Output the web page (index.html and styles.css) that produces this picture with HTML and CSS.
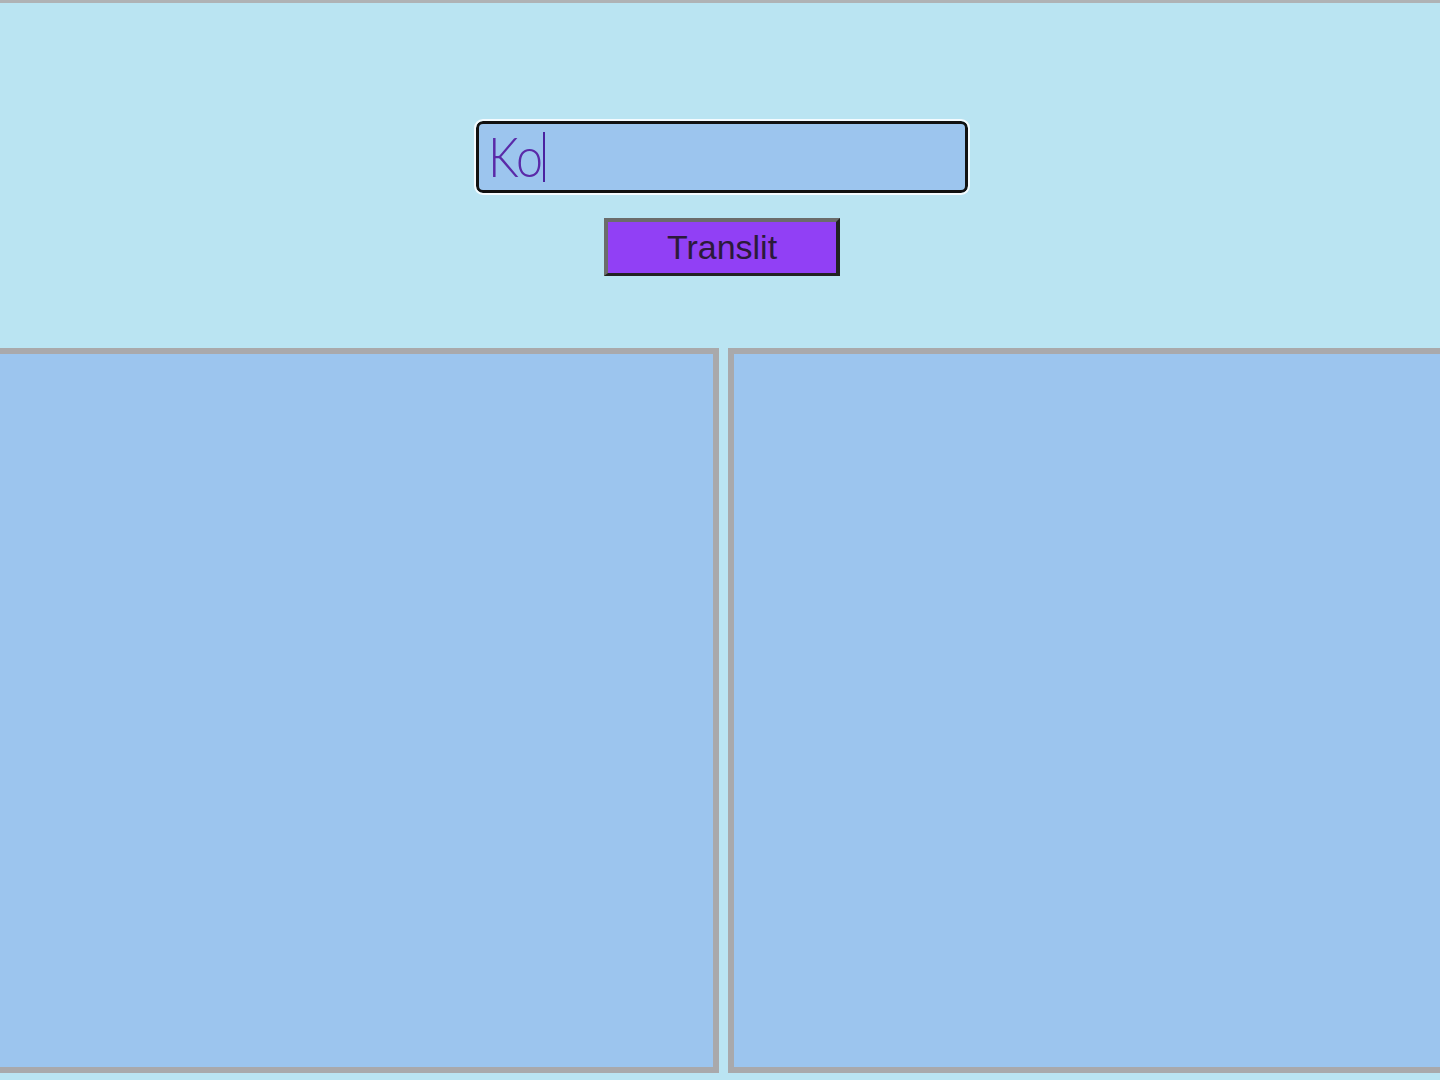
FILE: index.html
```html
<!DOCTYPE html>
<html lang="en">
<head>
<meta charset="utf-8">
<title>Translit</title>
<link rel="stylesheet" href="styles.css">
</head>
<body>
  <header class="top">
    <div class="field" role="textbox" aria-label="Text to transliterate"><span class="field-text">Ko</span><span class="caret"></span></div>
    <button class="btn" type="button">Translit</button>
  </header>
  <main class="panels">
    <section class="panel"></section>
    <section class="panel"></section>
  </main>
</body>
</html>
```

FILE: styles.css
```css
html, body {
  margin: 0;
  padding: 0;
}

body {
  background: #bae4f2;
  border-top: 3px solid #afb2b5;
  height: 1077px;
  overflow: hidden;
  font-family: "Liberation Sans", Arial, sans-serif;
}

.top {
  display: flex;
  flex-direction: column;
  align-items: center;
  padding: 118px 0 0 4px;
  height: 345px;
  box-sizing: border-box;
}

.field {
  flex-shrink: 0;
  box-sizing: border-box;
  width: 492px;
  height: 72px;
  border: 3px solid #111;
  border-radius: 7px;
  outline: 2px solid #f4fbff;
  background: #9cc5ee;
  display: flex;
  align-items: center;
  padding-left: 9px;
  color: #5a2aa8;
}

.field-text {
  font-family: "Lato", "Liberation Sans", sans-serif;
  font-weight: 300;
  font-size: 55px;
  letter-spacing: -1px;
  line-height: 1;
  transform: scaleX(0.88);
  transform-origin: left center;
  display: inline-block;
  margin-right: -7px;
  margin-top: -2px;
}

.caret {
  display: inline-block;
  width: 2px;
  height: 50px;
  background: #4a22a0;
  margin-left: 1px;
}

.btn {
  flex-shrink: 0;
  margin-top: 25px;
  box-sizing: border-box;
  width: 236px;
  height: 58px;
  background: #9140f5;
  border-style: solid;
  border-width: 4px 4px 3px 4px;
  border-color: #6b6b6b #222 #222 #6b6b6b;
  color: #2b1a3a;
  font-family: "Liberation Sans", Arial, sans-serif;
  font-size: 34px;
  padding: 0;
  cursor: pointer;
}

.panels {
  display: flex;
  gap: 9px;
  margin: 0 -12px 0 -6px;
  height: 725px;
}

.panel {
  flex: 1;
  box-sizing: border-box;
  border: 6px solid #a9a9ab;
  background: #9cc5ee;
}
```
